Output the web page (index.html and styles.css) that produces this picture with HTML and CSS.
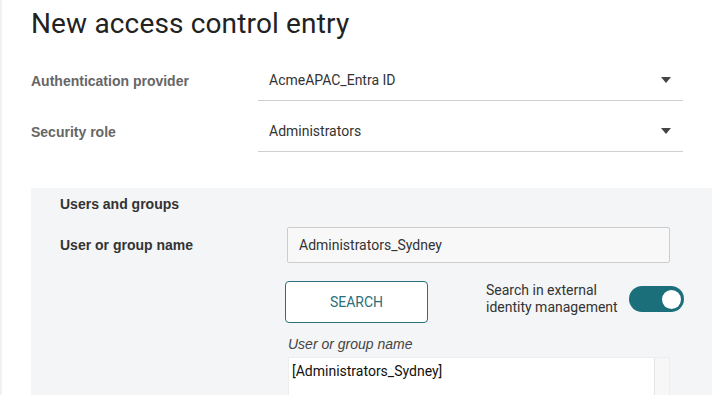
FILE: index.html
```html
<!DOCTYPE html>
<html>
<head>
<meta charset="utf-8">
<link rel="stylesheet" href="styles.css">
</head>
<body>
<div class="page">
  <h1 class="title">New access control entry</h1>
  <div class="field-row">
    <div class="field-label">Authentication provider</div>
    <div class="select">
      <span class="select-value">AcmeAPAC_Entra ID</span>
      <svg class="caret" width="10" height="6" viewBox="0 0 10 6"><path d="M0 0H10L5 6Z" fill="#444"/></svg>
    </div>
  </div>
  <div class="field-row second">
    <div class="field-label">Security role</div>
    <div class="select">
      <span class="select-value">Administrators</span>
      <svg class="caret" width="10" height="6" viewBox="0 0 10 6"><path d="M0 0H10L5 6Z" fill="#444"/></svg>
    </div>
  </div>
  <div class="panel">
    <div class="panel-title">Users and groups</div>
    <div class="panel-grid">
      <div class="panel-label">User or group name</div>
      <div class="panel-col">
        <div class="text-input">Administrators_Sydney</div>
        <div class="action-row">
          <button class="search-btn">SEARCH</button>
          <div class="toggle-group">
            <span class="toggle-text">Search in external<br>identity management</span>
            <span class="toggle"><span class="knob"></span></span>
          </div>
        </div>
        <div class="list-caption">User or group name</div>
        <div class="listbox">
          <div class="list-items">[Administrators_Sydney]</div>
          <div class="list-scroll"></div>
        </div>
      </div>
    </div>
  </div>
</div>
</body>
</html>
```
FILE: styles.css
```css
html, body {
  margin: 0;
  padding: 0;
  background: #fff;
  overflow: hidden;
  height: 100%;
}
body {
  font-family: Roboto, "Liberation Sans", sans-serif;
  font-size: 14px;
  color: #333;
}
.page {
  border-left: 2px solid #f2f2f2;
  padding-left: 29px;
  min-height: 100%;
  box-sizing: border-box;
}
.title {
  margin: 0;
  padding-top: 7px;
  font-size: 28px;
  font-weight: 400;
  line-height: 33px;
  letter-spacing: 0.15px;
  color: #222;
}
.field-row {
  display: flex;
  align-items: center;
  margin-top: 20px;
}
.field-row.second {
  margin-top: 10px;
}
.field-label {
  width: 227px;
  font-family: "Liberation Sans", Arial, sans-serif;
  font-weight: 700;
  color: #666;
  line-height: 20px;
}
.select {
  height: 40px;
  border-bottom: 1px solid #cfcfcf;
  display: flex;
  align-items: center;
  justify-content: space-between;
  padding: 0 12px 0 11px;
  width: 402px;
}
.select-value {
  color: #333;
}
.caret {
  display: block;
  margin-top: -1px;
}
.panel {
  margin-top: 36px;
  width: 681px;
  background: #f4f5f7;
  padding: 6px 0 0 29px;
  box-sizing: border-box;
  height: 207px;
}
.panel-title {
  font-family: "Liberation Sans", Arial, sans-serif;
  font-weight: 700;
  line-height: 20px;
  color: #333;
}
.panel-grid {
  display: flex;
  margin-top: 13px;
}
.panel-label {
  width: 227px;
  font-family: "Liberation Sans", Arial, sans-serif;
  font-weight: 700;
  color: #333;
  line-height: 36px;
}
.panel-col {
  width: 397px;
}
.text-input {
  width: 383px;
  height: 36px;
  box-sizing: border-box;
  border: 1px solid #cdcdcd;
  border-radius: 2px;
  background: #f8f8f8;
  padding-left: 11px;
  line-height: 34px;
  color: #333;
}
.action-row {
  display: flex;
  align-items: center;
  margin-top: 18px;
  margin-left: -2px;
}
.search-btn {
  width: 143px;
  height: 42px;
  box-sizing: border-box;
  border: 1px solid #2a6f79;
  border-radius: 4px;
  background: #fff;
  color: #2b6f7a;
  font-family: Roboto, "Liberation Sans", sans-serif;
  font-size: 14px;
  padding: 0;
}
.toggle-group {
  margin-left: auto;
  display: flex;
  align-items: center;
  margin-top: -6px;
}
.toggle-text {
  line-height: 17px;
  color: #333;
  width: 143px;
}
.toggle {
  display: flex;
  align-items: center;
  justify-content: flex-end;
  width: 55px;
  height: 26px;
  border-radius: 13px;
  background: #1b6f7b;
  padding-right: 3px;
  box-sizing: border-box;
}
.knob {
  width: 19px;
  height: 19px;
  border-radius: 50%;
  background: #fff;
}
.list-caption {
  margin-top: 11px;
  font-family: "Liberation Sans", Arial, sans-serif;
  font-style: italic;
  color: #444;
  line-height: 20px;
  padding-left: 1px;
}
.listbox {
  margin-top: 3px;
  margin-left: 1px;
  width: 382px;
  height: 38px;
  display: flex;
  border: 1px solid #eeeeee;
  border-bottom: none;
  box-sizing: border-box;
}
.list-items {
  flex: 1;
  background: #fff;
  color: #111;
  padding: 3px 0 0 3px;
  line-height: 20px;
}
.list-scroll {
  width: 14px;
  background: #f7f7f7;
  border-left: 1px solid #e6e6e6;
}
```
